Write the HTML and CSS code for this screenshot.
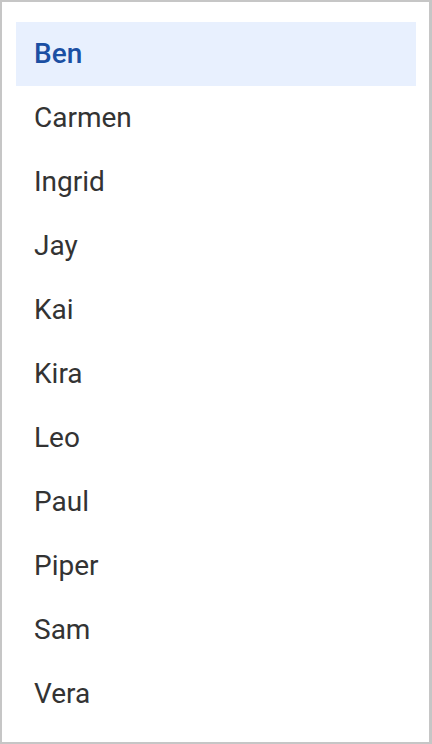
FILE: index.html
```html
<!DOCTYPE html>
<html>
<head>
<meta charset="utf-8">
<link rel="stylesheet" href="styles.css">
</head>
<body>
<div class="frame">
  <ul class="list">
    <li class="item selected">Ben</li>
    <li class="item">Carmen</li>
    <li class="item">Ingrid</li>
    <li class="item">Jay</li>
    <li class="item">Kai</li>
    <li class="item">Kira</li>
    <li class="item">Leo</li>
    <li class="item">Paul</li>
    <li class="item">Piper</li>
    <li class="item">Sam</li>
    <li class="item">Vera</li>
  </ul>
</div>
</body>
</html>
```
FILE: styles.css
```css
html, body {
  margin: 0;
  padding: 0;
  background: #fff;
}
.frame {
  box-sizing: border-box;
  width: 432px;
  height: 744px;
  border: 2px solid #c6c6c6;
  border-right-width: 3px;
  padding: 20px 13px 0 14px;
  background: #fff;
}
.list {
  list-style: none;
  margin: 0;
  padding: 0;
  display: flex;
  flex-direction: column;
}
.item {
  box-sizing: border-box;
  height: 64px;
  display: flex;
  align-items: center;
  padding-left: 18px;
  padding-bottom: 2px;
  font-family: Roboto, "Noto Sans", sans-serif;
  font-size: 28px;
  color: #333;
}
.item.selected {
  background: #e8f0fe;
  color: #1b4fa3;
  font-weight: 500;
}
```
